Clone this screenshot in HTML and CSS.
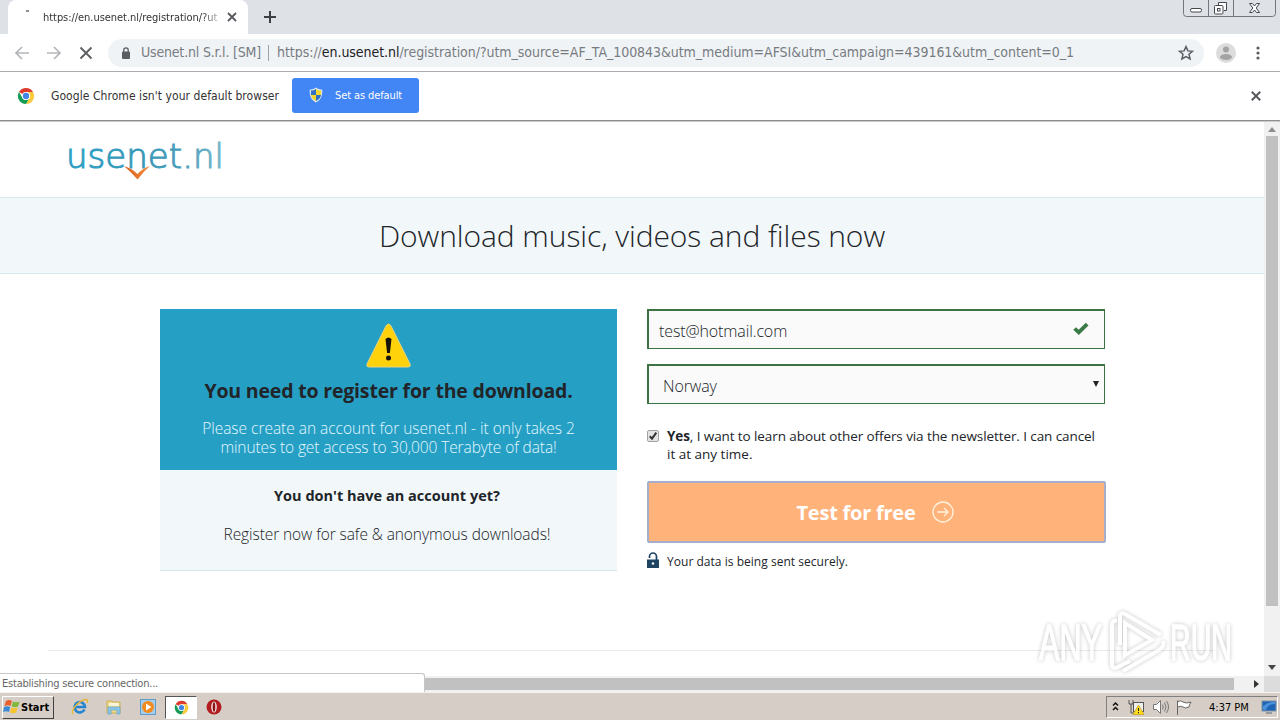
FILE: index.html
```html
<!DOCTYPE html>
<html lang="en">
<head>
<meta charset="utf-8">
<title>Usenet.nl registration</title>
<link rel="stylesheet" href="styles.css">
</head>
<body>
<svg class="defs" width="0" height="0" aria-hidden="true">
  <symbol id="chrome" viewBox="0 0 20 20">
    <path d="M10 10 2.200 5.500A9 9 0 0 1 17.800 5.500H10z" fill="#dd3b2c"/>
    <path d="M17.800 5.500A9 9 0 0 1 10 19l3.900-6.800A4.500 4.500 0 0 0 10 5.500z" fill="#fbcb3c"/>
    <path d="M2.200 5.500A9 9 0 0 0 10 19l3.900-6.800a4.500 4.500 0 0 1-7.800 0z" fill="#169c57"/>
    <circle cx="10" cy="10" r="4.500" fill="#fff"/><circle cx="10" cy="10" r="3.500" fill="#4285e4"/>
  </symbol>
</svg>
<header class="tabstrip">
  <div class="tab">
    <i class="spinner"></i>
    <span class="tab-title"><span class="t t-tab">https://en.usenet.nl/registration/?ut</span></span>
    <svg width="10" height="10" viewBox="0 0 10 10"><path d="M1 1l8 8M9 1L1 9" stroke="#55595e" stroke-width="1.800"/></svg>
  </div>
  <svg class="plus" width="12" height="12" viewBox="0 0 12 12"><path d="M6 0v12M0 6h12" stroke="#3c4043" stroke-width="2"/></svg>
  <svg class="winbtns" width="94" height="17" viewBox="0 0 94 17" fill="none" stroke="#72777f">
    <path d="M.5 0v13.500a3 3 0 0 0 3 3h86a3 3 0 0 0 3-3V0M25.500 0v16M50.500 0v16"/>
    <g stroke="#44484e"><rect x="7.500" y="8.500" width="11" height="3.500" rx="1.500" fill="#fff"/>
    <path d="M35.500 5V2.500h8v8H41" fill="#fff"/><rect x="31.500" y="5.500" width="8.500" height="8.500" rx="1" fill="#fff"/><rect x="34.500" y="8.500" width="2.500" height="2.500"/>
    <path d="M66.500 3.500h3l2 2.500 2-2.500h3l-3.300 4.500 3.300 4.500h-3l-2-2.500-2 2.500h-3l3.300-4.500z" fill="#fff"/></g>
  </svg>
</header>
<div class="toolbar">
  <svg class="nav" width="80" height="16" viewBox="0 0 80 16" fill="none" stroke-width="1.700">
    <path d="M15 8H2M8 2L2 8l6 6M33 8h13M40 2l6 6-6 6" stroke="#b4b6b9"/>
    <path d="M66.500 2.500l11 11M77.500 2.500l-11 11" stroke="#5a5d61" stroke-width="1.800"/>
  </svg>
  <div class="omnibox">
    <svg class="lock" width="10" height="12" viewBox="0 0 10 12"><rect x="1" y="4.500" width="8" height="7.500" rx="1" fill="#5a5e63"/><path d="M2.800 5V3a2.200 2.200 0 0 1 4.400 0v2" fill="none" stroke="#5a5e63" stroke-width="1.300"/></svg>
    <span class="t t-org">Usenet.nl S.r.l. [SM]</span>
    <i class="sep"></i>
    <span class="t t-url">https://<b>en.usenet.nl</b>/registration/?utm_source=AF_TA_100843&amp;utm_medium=AFSI&amp;utm_campaign=439161&amp;utm_content=0_1</span>
    <svg class="star" width="16" height="16" viewBox="0 0 16 16"><path d="M8 1.600l1.900 4.300 4.600.4-3.500 3 1.100 4.600L8 11.500l-4.100 2.400L5 9.300l-3.500-3 4.600-.4z" fill="none" stroke="#5a5e63" stroke-width="1.500"/></svg>
  </div>
  <svg class="avatar" width="20" height="20" viewBox="0 0 20 20"><circle cx="10" cy="10" r="10" fill="#dcdcdc"/><circle cx="10" cy="6.500" r="3" fill="#a3a3a3"/><ellipse cx="10" cy="14" rx="6" ry="3" fill="#a3a3a3"/></svg>
  <svg width="4" height="14" viewBox="0 0 4 14" fill="#5a5e63"><circle cx="2" cy="2" r="1.600"/><circle cx="2" cy="7" r="1.600"/><circle cx="2" cy="12" r="1.600"/></svg>
</div>
<div class="infobar">
  <svg width="18" height="18"><use href="#chrome"/></svg>
  <span class="t t-info">Google Chrome isn't your default browser</span>
  <button class="set-default">
    <svg width="14" height="16" viewBox="0 0 14 16"><path d="M7 .5C5 2 3 2.500.7 2.500.5 9 2 13 7 15.500 12 13 13.500 9 13.300 2.500 11 2.500 9 2 7 .5z" fill="#d9e6ee"/><path d="M7 2C5.500 3 4 3.500 2 3.600V8h5z" fill="#2f72c4"/><path d="M7 2c1.500 1 3 1.500 5 1.600V8H7z" fill="#f6d62c"/><path d="M2 8h5v6C4 12.500 2.300 10.500 2 8z" fill="#f6d62c"/><path d="M12 8H7v6c3-1.500 4.700-3.500 5-6z" fill="#2f72c4"/></svg>
    <span class="t t-set">Set as default</span>
  </button>
  <svg class="info-x" width="10" height="10" viewBox="0 0 10 10"><path d="M.8.800l8.400 8.400M9.200.8L.8 9.200" stroke="#55595e" stroke-width="2"/></svg>
</div>
<div class="viewport">
  <div class="view-row">
    <main class="page">
      <div class="brand">
        <svg width="170" height="50" viewBox="0 0 170 50">
          <defs><linearGradient id="lg" x1="0" x2="1"><stop offset="0" stop-color="#2ba0c6"/><stop offset=".5" stop-color="#3998b8"/><stop offset=".75" stop-color="#4a9fba"/><stop offset="1" stop-color="#7cb9cc"/></linearGradient>
          <linearGradient id="or" x1="0" x2="1"><stop offset="0" stop-color="#d9601a"/><stop offset="1" stop-color="#f58a3c"/></linearGradient></defs>
          <text class="logo-text" x="0" y="32.500" textLength="158" lengthAdjust="spacingAndGlyphs" fill="url(#lg)">usenet.nl</text>
          <path d="M58 31q8 2.500 13.500 8Q77 33 84 31q-7 6-12.500 13.500Q65 37 58 31z" fill="url(#or)"/>
        </svg>
      </div>
      <div class="hero"><h1 class="t t-h1">Download music, videos and files now</h1></div>
      <div class="columns">
        <section class="left">
          <div class="notice">
            <svg class="warn" width="46" height="46" viewBox="0 0 46 46"><path d="M20 3q2.500-4 5 0L44 41q1 3-2 3H3q-3 0-2-3z" fill="#ffd20c" stroke="#e8d67c" stroke-width="1"/><path d="M19.500 16q3-3 6 0l-1.600 14h-2.800z" fill="#17130a"/><circle cx="22.500" cy="35" r="2.500" fill="#17130a"/></svg>
            <h2 class="t t-h2">You need to register for the download.</h2>
            <p class="t t-p1">Please create an account for usenet.nl - it only takes 2</p>
            <p class="t t-p2">minutes to get access to 30,000 Terabyte of data!</p>
          </div>
          <div class="sub">
            <h3 class="t t-h3">You don't have an account yet?</h3>
            <p class="t t-p3">Register now for safe &amp; anonymous downloads!</p>
          </div>
        </section>
        <form class="right">
          <div class="field"><span class="t t-mail">test@hotmail.com</span><svg width="16" height="14" viewBox="0 0 16 14"><path d="M.3 7.800L3 5.200l2.700 2.500L12.800.8l2.700 2.600-9.700 9.700z" fill="#3a7a44"/></svg></div>
          <div class="field select"><span class="t t-nor">Norway</span><i class="caret"></i></div>
          <label class="agree">
            <svg width="12" height="12" viewBox="0 0 12 12"><rect x=".5" y=".5" width="11" height="11" rx="1.500" fill="#e4e4e4" stroke="#a2a2a2"/><path d="M2.700 6.200l2.300 2.400 4.300-6" fill="none" stroke="#333" stroke-width="2"/></svg>
            <span><span class="t t-a1"><b>Yes</b>, I want to learn about other offers via the newsletter. I can cancel</span><br><span class="t t-a2">it at any time.</span></span>
          </label>
          <div class="cta"><span class="t t-cta">Test for free</span><svg width="22" height="22" viewBox="0 0 22 22" fill="none" stroke="#fff3df" stroke-width="1.300"><circle cx="11" cy="11" r="10"/><path d="M5.500 11h10.500M12 7l4 4-4 4"/></svg></div>
          <div class="secure"><svg width="12" height="16" viewBox="0 0 12 16"><path d="M2.500 6V4.500a3.500 3.500 0 0 1 7 0V8" fill="none" stroke="#1d4363" stroke-width="1.700"/><rect y="7.500" width="12" height="8.500" fill="#1d4363"/><circle cx="6" cy="11.500" r="1.200" fill="#fff"/></svg><span class="t t-sec">Your data is being sent securely.</span></div>
        </form>
      </div>
      <hr class="rule">
    </main>
    <div class="vbar"><i class="up"></i><i class="thumb"></i><i class="down"></i></div>
  </div>
  <div class="hbar"><i class="hthumb"></i><i class="rt"></i><i class="corner"></i></div>
  <div class="status"><span class="t t-stat">Establishing secure connection...</span></div>
  <svg class="watermark" width="220" height="76" viewBox="0 0 220 76">
    <g class="wm"><text x="8" y="57" textLength="63" lengthAdjust="spacingAndGlyphs">ANY</text><text x="139" y="57" textLength="62" lengthAdjust="spacingAndGlyphs">RUN</text>
    <path d="M81 61V22q0-5 5-4M81 61q0 6 6 3l12-6M89 42V13q0-4 5-2l36 21M92 68l36-21q6-4 4-9M94 20v32l27-15z" fill="none" stroke="#fff" stroke-width="4"/></g>
  </svg>
</div>
<footer class="taskbar">
  <div class="start"><svg width="18" height="16" viewBox="0 0 18 16"><path d="M3 2q3-2 6 0L7.500 7Q5 5.500 1.500 7z" fill="#e8602c"/><path d="M10 2.500q3 1.500 6.500 0L15 7.500q-3 1.500-6.300 0z" fill="#7fb83a"/><path d="M1.200 8Q4 6.500 7.200 8L6 13Q3 11.500 0 13z" fill="#3b8ad8"/><path d="M8.400 8.500q3 1.500 6.300 0l-1.500 5q-3 1.500-6.200 0z" fill="#f6c52e"/></svg><b class="t t-start">Start</b></div>
  <div class="task ie"><svg width="18" height="18" viewBox="0 0 18 18"><path d="M13.500 11.500A5.200 5.200 0 1 1 14 9H5" fill="none" stroke="#2484cf" stroke-width="2.600"/><path d="M2 16C-1 13 8 2 15 1.500c2 0 2 1.500 1 3.500" fill="none" stroke="#e9b63a" stroke-width="1.400"/></svg></div>
  <div class="task"><svg width="18" height="18" viewBox="0 0 18 18"><path d="M2 3h5l1 1h7v11H2z" fill="#efd98a" stroke="#cfae54"/><path d="M4 5h10v3H4z" fill="#f9f4d9"/><path d="M3 9h12v7h-3v-4H6v4H3z" fill="#8cc5e6" stroke="#5fa6d0" stroke-width=".7"/></svg></div>
  <div class="task"><svg width="18" height="18" viewBox="0 0 18 18"><rect x="1.500" y="1.500" width="15" height="15" fill="#a8cdea" stroke="#5f9cc9"/><circle cx="9" cy="9" r="6" fill="#f28b1d"/><path d="M7 5.500v7L12.500 9z" fill="#fff"/></svg></div>
  <div class="task active"><svg width="15" height="15"><use href="#chrome"/></svg></div>
  <div class="task"><svg width="16" height="16" viewBox="0 0 16 16"><circle cx="8" cy="8" r="7.500" fill="#b01c1f"/><ellipse cx="8" cy="8" rx="2.800" ry="5.500" fill="#f4e4e4"/><ellipse cx="8" cy="8" rx="1.300" ry="4.800" fill="#8c1215"/></svg></div>
  <div class="tray">
    <svg width="84" height="18" viewBox="0 0 84 18"><path d="M2 7.500L4.500 5 7 7.500M2 12L4.500 9.500 7 12" fill="none" stroke="#111" stroke-width="1.500"/>
      <path d="M18 2v4h4V2M20 6v9h3" fill="none" stroke="#555"/><rect x="22.500" y="4.500" width="10" height="9" fill="#eee" stroke="#555"/><path d="M27.500 7l5.500 9.500H22z" fill="#ffdc1c" stroke="#b8960e" stroke-width=".6"/><path d="M27.500 10v3M27.500 14v1.300" stroke="#222"/>
      <path d="M42.500 6.500h3l4-4v13l-4-4h-3z" fill="#fff" stroke="#777"/><path d="M51.500 6.500q1.500 2.500 0 5M53.500 4.500q3 4.500 0 9M55.500 3q4 6 0 12" fill="none" stroke="#777"/>
      <path d="M66.500 17V2.500M67 3.500q3-1.500 5 .5 3 2 8 0-2 3-2 5-4 2-6 0-3-1.500-5 0" fill="#fff" stroke="#666"/></svg>
    <span class="t t-clock">4:37 PM</span>
    <svg width="16" height="16" viewBox="0 0 16 16"><rect x="1" y="2" width="14" height="10" fill="#1f63b5" stroke="#7d93a8"/><path d="M2 11V7q6-5 12-4v2q-7 0-9 6z" fill="#4b92dc"/><path d="M5 14h6" stroke="#567"/></svg>
  </div>
</footer>
</body>
</html>
```
FILE: styles.css
```css
* { box-sizing: border-box; }
body { margin: 0; width: 1280px; height: 720px; overflow: hidden; display: flex; flex-direction: column; background: #fff; font-family: "Open Sans", "Noto Sans", sans-serif; color: #212529; }
h1, h2, h3, p { margin: 0; }
svg { display: block; flex: none; }
.defs { position: absolute; }
.t { white-space: nowrap; }
.tabstrip { height: 34px; flex: none; background: #dee1e6; display: flex; align-items: flex-start; font-family: "DejaVu Sans Condensed", "DejaVu Sans", sans-serif; font-stretch: condensed; }
.tab { margin-left: 8px; width: 240px; height: 34px; background: #fff; border-radius: 8px 8px 0 0; display: flex; align-items: center; padding-right: 11px; }
.spinner { width: 3px; height: 2px; margin: -12px 14px 0 18px; background: #8b8f94; }
.tab-title { width: 176px; margin-right: 8px; overflow: hidden; display: flex; -webkit-mask-image: linear-gradient(90deg, #000 90%, rgba(0,0,0,.3)); mask-image: linear-gradient(90deg, #000 90%, rgba(0,0,0,.3)); }
.t-tab { font-size: 11px; letter-spacing: -.05px; color: #333; }
.plus { margin: 11px 0 0 16px; }
.winbtns { margin-left: auto; margin-right: 3px; }
.toolbar { height: 38px; flex: none; border-bottom: 1px solid #a9abae; display: flex; align-items: center; padding-left: 14px; font-family: "DejaVu Sans Condensed", "DejaVu Sans", sans-serif; font-stretch: condensed; }
.omnibox { margin: 0 12px 0 14px; width: 1096px; height: 28px; border-radius: 14px; background: #f0f3f6; display: flex; align-items: center; padding: 0 10px 0 13px; font-size: 14px; line-height: 16px; color: #777c81; }
.t-org, .t-url { padding-bottom: 2px; }
.t-org { letter-spacing: -.18px; }
.t-url { letter-spacing: -.047px; }
.lock { margin-right: 10px; }
.sep { width: 1px; height: 16px; background: #9ea2a6; margin: 0 8px 0 7px; }
.t-url b { font-weight: 400; color: #202124; }
.star { margin-left: auto; }
.avatar { margin-right: 20px; }
.infobar { height: 49px; flex: none; border-bottom: 1px solid #8c8e91; display: flex; align-items: center; padding: 0 19px 1px 17px; font-family: "DejaVu Sans Condensed", "DejaVu Sans", sans-serif; font-stretch: condensed; }
.t-info { font-size: 12px; margin-left: 16px; width: 241px; color: #333; letter-spacing: .06px; }
.set-default { width: 127px; height: 35px; border: 0; border-radius: 3px; background: #4285f4; color: #fff; display: flex; align-items: center; gap: 12px; padding: 0 0 1px 17px; font: inherit; font-size: 11px; letter-spacing: -.11px; }
.info-x { margin-left: auto; }
.viewport { position: relative; flex: none; height: 571px; border-top: 1px solid #c9cacc; display: flex; flex-direction: column; }
.view-row { height: 554px; display: flex; }
.page { width: 1264px; font-weight: 300; }
.brand { height: 75px; padding: 13px 0 0 66px; }
.logo-text { font-family: "DejaVu Sans", sans-serif; font-weight: 200; font-size: 33px; stroke: url(#lg); stroke-width: 1; }
.hero { height: 77px; background: #f2f7fa; border-top: 1px solid #d7e9f0; border-bottom: 1px solid #d7e9f0; display: flex; justify-content: center; align-items: center; }
.t-h1 { font-size: 30px; font-weight: 300; line-height: 40px; letter-spacing: -.08px; }
.columns { display: flex; gap: 30px; padding: 35px 0 0 160px; }
.left { width: 457px; text-align: center; }
.notice { height: 161px; background: #269fc5; padding-top: 14px; }
.warn { margin: 0 auto; }
.t-h2 { font-size: 19.5px; line-height: 24px; margin-top: 10px; font-weight: 700; letter-spacing: -.18px; }
.t-p1, .t-p2 { color: #e4f8ff; font-size: 15.5px; line-height: 19px; }
.t-p1 { margin-top: 16px; letter-spacing: -.02px; }
.t-p2 { letter-spacing: -.11px; }
.sub { height: 101px; background: #f2f7fa; border-bottom: 1px solid #d7e6ec; padding: 16px 3px 0 0; }
.t-h3 { font-size: 14.5px; line-height: 20px; font-weight: 700; letter-spacing: .01px; }
.t-p3 { font-size: 15.5px; line-height: 20px; margin-top: 18px; letter-spacing: -.09px; }
.right { width: 459px; }
.field { width: 458px; height: 40px; border: 1px solid #3d7344; border-width: 2px 1px 1px 2px; background: #fafafa; display: flex; align-items: center; justify-content: space-between; padding: 2px 15px 0 10px; font-size: 16px; letter-spacing: -.12px; }
.field svg { margin-top: -4px; }
.select { margin-top: 15px; padding: 2px 5px 0 14px; }
.caret { border: 3px solid transparent; border-top: 6px solid #222; border-bottom: 0; margin-top: -4px; }
.agree { display: flex; gap: 8px; margin-top: 23px; font-size: 13.5px; line-height: 18px; font-weight: 400; }
.t-a1 { letter-spacing: -.09px; }
.agree svg { margin-top: 3px; }
.cta { height: 62px; margin-top: 18px; background: #ffb27a; border: 2px solid #a5aecb; border-radius: 2px; display: flex; align-items: center; justify-content: center; gap: 17px; color: #fff; font-weight: 700; font-size: 20px; letter-spacing: -.24px; padding-right: 2px; }
.secure { display: flex; align-items: center; gap: 8px; margin-top: 8px; font-size: 12px; line-height: 18px; font-weight: 400; letter-spacing: .03px; }
.secure svg { margin-top: -2px; }
.t-sec { margin-top: 2px; }
.rule { border: 0; height: 1px; background: #e9e9e9; margin: 79px 48px 0; }
.vbar { width: 16px; background: #f1f1f1; display: flex; flex-direction: column; align-items: center; }
.up { border: 4px solid transparent; border-top: 0; border-bottom: 5px solid #8f8f8f; margin: 5px 0 4px; }
.thumb { width: 12px; height: 470px; background: #c1c1c1; }
.down { border: 4px solid transparent; border-top: 5px solid #444; border-bottom: 0; margin-top: auto; margin-bottom: 6px; }
.hbar { height: 16px; background: #f1f1f1; display: flex; align-items: center; }
.hthumb { margin-left: 424px; width: 810px; height: 12px; background: #c1c1c1; }
.rt { border: 4px solid transparent; border-left: 5px solid #333; border-right: 0; margin-left: 20px; }
.corner { width: 16px; height: 16px; background: #dcdcdc; margin-left: auto; }
.status { position: absolute; left: 0; bottom: 0; width: 425px; height: 19px; background: #fff; border: 1px solid #c6c6c6; border-left: 0; border-bottom: 0; border-radius: 0 3px 0 0; padding-left: 2px; font: 11px/19px "DejaVu Sans Condensed", "DejaVu Sans", sans-serif; font-stretch: condensed; color: #666; }
.t-stat { letter-spacing: -.21px; }
.watermark { position: absolute; left: 1031px; top: 481px; }
.wm { filter: drop-shadow(0 0 2px rgba(0,0,0,.35)); opacity: .65; }
.wm text { font: 400 50px "Liberation Sans", sans-serif; fill: #fff; stroke: #fff; stroke-width: 1.5; }
.taskbar { height: 28px; flex: none; background: #d6cec6; border-top: 1px solid #f6f3ef; display: flex; align-items: center; padding: 1px 2px 0; font-family: "DejaVu Sans Condensed", "DejaVu Sans", sans-serif; font-size: 11px; color: #000; }
.start { width: 52px; height: 23px; border: 1px solid #fff; border-right-color: #404040; border-bottom-color: #404040; display: flex; align-items: center; gap: 0; margin-right: 9px; }
.task { width: 34px; height: 23px; display: flex; align-items: center; justify-content: center; }
.active { background: #fff; border: 1px solid #555; border-right-color: #fff; border-bottom-color: #fff; width: 32px; }
.tray { margin-left: auto; width: 172px; height: 22px; border: 1px solid #808080; border-right-color: #fff; border-bottom-color: #fff; display: flex; align-items: center; padding-left: 4px; }
.t-clock { margin: 0 11px 0 14px; width: 41px; }
```
